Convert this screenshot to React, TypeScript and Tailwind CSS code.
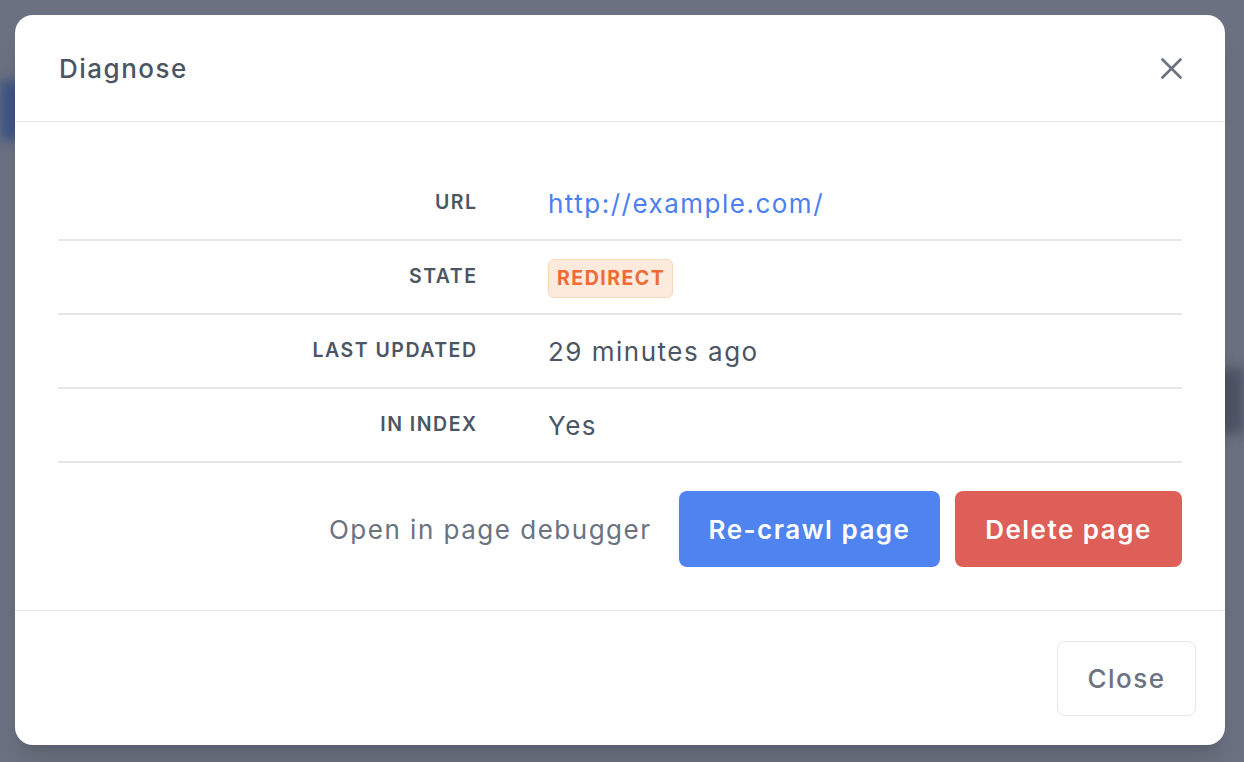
import React from "react";

const rows: { label: string; value: React.ReactNode }[] = [
  {
    label: "URL",
    value: <a className="text-[#4a80ef]">http://example.com/</a>,
  },
  {
    label: "STATE",
    value: (
      <span className="inline-flex items-center h-[39px] pl-[8px] pr-[6.5px] rounded-[6px] border border-[#f8d8bb] bg-[#fcebdc] text-[#ef6a34] text-[19.5px] font-bold">
        REDIRECT
      </span>
    ),
  },
  { label: "LAST UPDATED", value: "29 minutes ago" },
  { label: "IN INDEX", value: "Yes" },
];

export default function App() {
  return (
    <div
      className="relative w-[1244px] h-[762px] overflow-hidden bg-[#6b7180] tracking-[1.5px]"
      style={{ fontFamily: "Inter, 'Noto Sans', sans-serif" }}
    >
      <div className="absolute left-0 top-[80px] w-[40px] h-[60px] bg-[#3e5383] blur-[6px]" />
      <div className="absolute right-0 top-[368px] w-[40px] h-[66px] bg-[#4d5364] blur-[6px]" />
      <div className="absolute left-[15px] top-[15px] w-[1210px] h-[730px] bg-white rounded-[18px] flex flex-col shadow-xl">
        <div className="h-[107px] flex items-center justify-between pl-[44px] pr-[38px] border-b border-[#e5e7eb] shrink-0">
          <h2 className="text-[26px] font-medium text-[#4b5563]">Diagnose</h2>
          <svg width="31" height="31" viewBox="0 0 24 24" fill="none" stroke="#6b7280" strokeWidth="2.1" strokeLinecap="round">
            <path d="M5 5l14 14M19 5L5 19" />
          </svg>
        </div>
        <div className="flex-1 px-[43px] pt-[45px] pb-[43px] flex flex-col">
          {rows.map((r) => (
            <div key={r.label} className="flex items-center h-[74px] border-b-2 border-[#e5e7eb]">
              <div className="w-[454px] pr-[34.5px] text-right text-[19.5px] font-semibold text-[#4b5563] shrink-0">
                {r.label}
              </div>
              <div className="pl-[36px] text-[26px] text-[#4b5563]">{r.value}</div>
            </div>
          ))}
          <div className="flex items-center justify-end mt-[28px]">
            <span className="text-[26px] text-[#6b7280] mr-[27.5px]">Open in page debugger</span>
            <button className="w-[261px] h-[76px] rounded-[8px] bg-[#4f83ef] text-white text-[26px] font-semibold">
              Re-crawl page
            </button>
            <button className="ml-[15px] w-[227px] h-[76px] rounded-[8px] bg-[#de5e58] text-white text-[26px] font-semibold">
              Delete page
            </button>
          </div>
        </div>
        <div className="h-[135px] border-t border-[#e5e7eb] flex items-start justify-end pt-[30px] pr-[29px] shrink-0">
          <button className="w-[139px] h-[75px] rounded-[8px] border border-[#e5e7eb] bg-white text-[26px] font-medium text-[#6b7280]">
            Close
          </button>
        </div>
      </div>
    </div>
  );
}
